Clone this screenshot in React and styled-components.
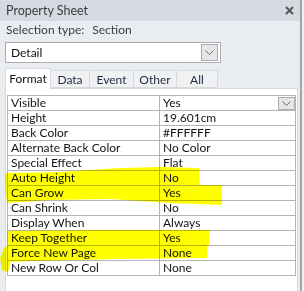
import React from "react";
import styled, { createGlobalStyle } from "styled-components";

const Global = createGlobalStyle`
  html, body { margin: 0; padding: 0; background: #f0f0f0; }
  body { font-family: "Lato", "Noto Sans", sans-serif; font-size: 12px; color: #1a1a1a; }
`;

const Window = styled.div`
  position: relative;
  width: 300px;
  height: 291px;
  background: #e9ecf0;
  border-right: 2px solid #a2a4a8;
  display: flex;
  flex-direction: column;
  overflow: hidden;
`;

const TitleBar = styled.div`
  height: 21px;
  flex: none;
  background: #d5dae2;
  display: flex;
  align-items: center;
  justify-content: space-between;
  padding: 0 6px 0 6px;
`;

const Title = styled.span`
  font-size: 12.5px;
  color: #3c3c3c;
`;

const Body = styled.div`
  flex: 1;
  display: flex;
  flex-direction: column;
  padding: 0 2px 0 5px;
  min-height: 0;
`;

const SelectionRow = styled.div`
  height: 17px;
  display: flex;
  align-items: center;
  padding-left: 1px;
  font-size: 12px;
  color: #3c3c3c;
  gap: 8px;
  margin-bottom: 4px;
`;

const Combo = styled.div`
  width: 216px;
  height: 21px;
  box-sizing: border-box;
  border: 1px solid #abadb3;
  background: #fff;
  display: flex;
  align-items: center;
  justify-content: space-between;
  padding: 0 2px 0 5px;
  color: #111;
`;

const DropButton = styled.div`
  width: ${(p) => p.$w}px;
  height: ${(p) => p.$h}px;
  box-sizing: border-box;
  border: 1px solid #acacac;
  background: #e6e6e6;
  display: flex;
  align-items: center;
  justify-content: center;
`;

const Tabs = styled.div`
  display: flex;
  align-items: flex-end;
  height: 20px;
  margin-top: 5px;
  position: relative;
  z-index: 1;
`;

const Tab = styled.div`
  box-sizing: border-box;
  width: ${(p) => p.$w}px;
  height: ${(p) => (p.$active ? 21 : 18)}px;
  margin-bottom: ${(p) => (p.$active ? -1 : 0)}px;
  background: ${(p) => (p.$active ? "#fff" : "#f0f1f3")};
  border: 1px solid #d9d9d9;
  border-bottom: ${(p) => (p.$active ? "none" : "1px solid #d9d9d9")};
  border-left: ${(p) => (p.$first || p.$active ? "1px solid #d9d9d9" : "none")};
  display: flex;
  align-items: center;
  justify-content: center;
  padding-bottom: ${(p) => (p.$active ? 2 : 0)}px;
  color: ${(p) => (p.$active ? "#111" : "#1f2a44")};
  font-size: 12px;
`;

const Panel = styled.div`
  flex: 1;
  background: #fff;
  border: 1px solid #d9d9d9;
  border-bottom: none;
  padding: 6px 1px 0 1px;
`;

const Grid = styled.div`
  border: 1px solid #b4b4b4;
  border-bottom: none;
`;

const Row = styled.div`
  display: grid;
  grid-template-columns: 152px 1fr;
  height: 15px;
  box-sizing: border-box;
  border-bottom: 1px solid #b4b4b4;
`;

const Cell = styled.div`
  display: flex;
  align-items: center;
  justify-content: space-between;
  padding-left: 3px;
  border-right: ${(p) => (p.$label ? "1px solid #b4b4b4" : "none")};
  font-size: 12px;
  line-height: 14px;
  color: #141414;
  white-space: nowrap;
  overflow: hidden;
`;

const Highlight = styled.svg`
  position: absolute;
  left: 0;
  top: 0;
  pointer-events: none;
  mix-blend-mode: multiply;
  z-index: 5;
`;

const Chevron = ({ w = 9, h = 5 }) => (
  <svg width={w} height={h} viewBox="0 0 9 5">
    <path d="M0.5 0.5 L4.5 4.5 L8.5 0.5" fill="none" stroke="#6d6d6d" strokeWidth="1" />
  </svg>
);

const rows = [
  ["Visible", "Yes", true],
  ["Height", "19.601cm"],
  ["Back Color", "#FFFFFF"],
  ["Alternate Back Color", "No Color"],
  ["Special Effect", "Flat"],
  ["Auto Height", "No"],
  ["Can Grow", "Yes"],
  ["Can Shrink", "No"],
  ["Display When", "Always"],
  ["Keep Together", "Yes"],
  ["Force New Page", "None"],
  ["New Row Or Col", "None"],
];

const tabs = [
  ["Format", 46],
  ["Data", 39],
  ["Event", 44],
  ["Other", 43],
  ["All", 41],
];

export default function App() {
  return (
    <>
      <Global />
      <Window>
        <TitleBar>
          <Title>Property Sheet</Title>
          <svg width="9" height="9" viewBox="0 0 9 9">
            <path d="M1 1 L8 8 M8 1 L1 8" stroke="#555" strokeWidth="2" />
          </svg>
        </TitleBar>
        <Body>
          <SelectionRow>
            <span>Selection type:</span>
            <span>Section</span>
          </SelectionRow>
          <Combo>
            <span>Detail</span>
            <DropButton $w={17} $h={17}>
              <Chevron />
            </DropButton>
          </Combo>
          <Tabs>
            {tabs.map(([t, w], i) => (
              <Tab key={t} $w={w} $active={i === 0} $first={i === 0}>
                {t}
              </Tab>
            ))}
          </Tabs>
          <Panel>
            <Grid>
              {rows.map(([l, v, dd]) => (
                <Row key={l}>
                  <Cell $label>{l}</Cell>
                  <Cell>
                    <span>{v}</span>
                    {dd && (
                      <DropButton $w={17} $h={13}>
                        <Chevron w={9} h={5} />
                      </DropButton>
                    )}
                  </Cell>
                </Row>
              ))}
            </Grid>
          </Panel>
        </Body>
        <Highlight width="300" height="291" viewBox="0 0 300 291">
          <path
            d="M5 173 L60 172 L120 168 L160 167 L199 168 L200 185 L150 186 L5 186 Z"
            fill="#ffff00"
          />
          <path
            d="M5 186 L150 186 L222 185 L222 205 L170 203 L110 199 L50 200 L7 203 Z"
            fill="#ffff00"
          />
          <path
            d="M7 231 L100 230 L209 230 L209 245 L207 246 L207 258 L120 259 L30 261 L10 262 L8 272 L2 270 L0 258 L4 248 L7 246 Z"
            fill="#ffff00"
          />
        </Highlight>
      </Window>
    </>
  );
}
